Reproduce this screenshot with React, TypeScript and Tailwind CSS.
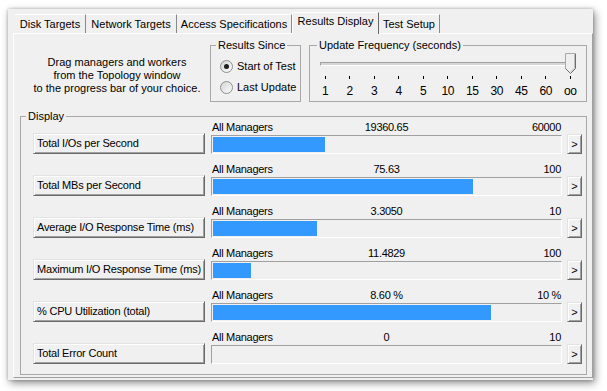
import React from "react";

const tabs = [
  { label: "Disk Targets", w: 71 },
  { label: "Network Targets", w: 91 },
  { label: "Access Specifications", w: 115 },
  { label: "Results Display", w: 87, active: true },
  { label: "Test Setup", w: 61 },
];

const rows = [
  { name: "Total I/Os per Second", value: "19360.65", max: "60000", frac: 0.3227 },
  { name: "Total MBs per Second", value: "75.63", max: "100", frac: 0.75 },
  { name: "Average I/O Response Time (ms)", value: "3.3050", max: "10", frac: 0.3 },
  { name: "Maximum I/O Response Time (ms)", value: "11.4829", max: "100", frac: 0.11 },
  { name: "% CPU Utilization (total)", value: "8.60 %", max: "10 %", frac: 0.8 },
  { name: "Total Error Count", value: "0", max: "10", frac: 0 },
];

const ticks = ["1", "2", "3", "4", "5", "10", "15", "30", "45", "60", "oo"];

function Radio({ checked, label }: { checked?: boolean; label: string }) {
  return (
    <div className="flex items-center h-[16px] pl-[9px]">
      <span className="w-[13px] h-[13px] rounded-full border border-[#8e8f8f] bg-linear-to-br from-[#d4d4d4] to-[#fdfdfd] flex items-center justify-center shrink-0">
        {checked && <span className="w-[5px] h-[5px] rounded-full bg-[#1e1e1e]" />}
      </span>
      <span className="ml-[4px] whitespace-nowrap">{label}</span>
    </div>
  );
}

function Thumb() {
  return (
    <svg width="11" height="21" viewBox="0 0 11 21" className="block">
      <path d="M0.5 0.5 H10.5 V15.5 L5.5 20.5 L0.5 15.5 Z" fill="#efefef" />
      <path d="M0.5 15.5 V0.5 H10" fill="none" stroke="#a8a8a8" />
      <path d="M10.5 0.5 V15.5 L5.5 20.5 L0.5 15.5" fill="none" stroke="#6e6e6e" />
      <path d="M9.5 1.5 V15 L5.5 19" fill="none" stroke="#bdbdbd" />
    </svg>
  );
}

export default function App() {
  return (
    <div className="w-[607px] h-[391px] bg-white overflow-hidden pt-[9px] pl-[8px] font-['Liberation_Sans',Arial,sans-serif] text-[11px] leading-[13px] text-black">
      <div className="w-[585px] h-[371px] bg-[#f0f0f0] shadow-[2px_3px_8px_rgba(0,0,0,0.45),0_0_3px_rgba(0,0,0,0.25)] pl-[5px] flex flex-col">
        {/* Tabs */}
        <div className="mt-[3px] h-[21px] flex items-end pl-[2px]">
          {tabs.map((t) =>
            t.active ? (
              <div
                key={t.label}
                style={{ width: t.w }}
                className="relative z-10 h-[22px] -mb-[1px] bg-[#f0f0f0] border-t border-l border-t-white border-l-white border-r border-r-[#696969] pt-[2px] text-center whitespace-nowrap"
              >
                {t.label}
              </div>
            ) : (
              <div
                key={t.label}
                style={{ width: t.w }}
                className="h-[19px] border-t border-t-white border-r border-r-[#8a8a8a] pt-[3px] text-center whitespace-nowrap"
              >
                {t.label}
              </div>
            )
          )}
        </div>

        {/* Tab panel */}
        <div className="w-[580px] h-[345px] border-t border-l border-t-white border-l-white border-r border-b border-r-[#a0a0a0] border-b-[#a0a0a0] pt-[5px] flex flex-col">
          {/* Upper section */}
          <div className="flex items-start">
            <div className="ml-[6px] w-[190px] pl-[4px] mt-[17px] text-center whitespace-nowrap">
              <div>Drag managers and workers</div>
              <div>from the Topology window</div>
              <div>to the progress bar of your choice.</div>
            </div>

            <fieldset className="w-[91px] h-[63px] border border-[#a8a8a8]">
              <legend className="ml-[5px] px-[2px] leading-[13px]">Results Since</legend>
              <div className="mt-[6px]">
                <Radio checked label="Start of Test" />
              </div>
              <div className="mt-[5px]">
                <Radio label="Last Update" />
              </div>
            </fieldset>

            <fieldset className="ml-[8px] w-[278px] h-[63px] border border-[#a8a8a8]">
              <legend className="ml-[7px] px-[2px] leading-[13px]">Update Frequency (seconds)</legend>
              <div className="relative mx-[10px] mt-[1px] h-[21px] flex items-center">
                <div className="w-full h-[4px] border-t border-l border-t-[#a0a0a0] border-l-[#a0a0a0] border-b border-r border-b-white border-r-white bg-[#d6d6d6]" />
                <div className="absolute right-0 top-0">
                  <Thumb />
                </div>
              </div>
              <div className="ml-[3px] mt-[2px] grid grid-cols-[repeat(11,24.5px)]">
                {ticks.map((t) => (
                  <div key={t} className="flex justify-center">
                    <div className="w-[1px] h-[3px] bg-black" />
                  </div>
                ))}
              </div>
              <div className="ml-[3px] mt-[6px] grid grid-cols-[repeat(11,24.5px)]">
                {ticks.map((t) => (
                  <div key={t} className="text-center text-[12px] leading-[13px] tracking-[-0.3px]">
                    {t}
                  </div>
                ))}
              </div>
            </fieldset>
          </div>

          {/* Display */}
          <fieldset className="ml-[6px] mt-[8px] w-[567px] h-[265px] border border-[#a8a8a8]">
            <legend className="ml-[5px] px-[2px] leading-[13px]">Display</legend>
            <div className="-mt-[2px] flex flex-col gap-[9px]">
              {rows.map((r) => (
                <div key={r.name} className="flex flex-col">
                  <div className="flex h-[12px] leading-[12px]">
                    <div className="w-[190px] shrink-0" />
                    <div className="w-[351px] grid grid-cols-[1fr_auto_1fr] px-[1px] whitespace-nowrap tracking-[-0.3px]">
                      <span>All Managers</span>
                      <span>{r.value}</span>
                      <span className="text-right">{r.max}</span>
                    </div>
                  </div>
                  <div className="flex items-start h-[21px] pl-[12px]">
                    <div className="w-[172px] h-[21px] bg-[#f0f0f0] border-t border-l border-t-[#e3e3e3] border-l-[#e3e3e3] border-b border-r border-b-[#696969] border-r-[#696969] shadow-[inset_1px_1px_0_#ffffff,inset_-1px_-1px_0_#a0a0a0] pl-[3px] flex items-center whitespace-nowrap tracking-[-0.2px]">
                      {r.name}
                    </div>
                    <div className="ml-[6px] mt-[2px] w-[351px] h-[19px] border-t border-l border-t-[#a0a0a0] border-l-[#a0a0a0] border-b border-r border-b-white border-r-white p-[1px]">
                      <div className="h-full bg-[#3399ff]" style={{ width: `${r.frac * 100}%` }} />
                    </div>
                    <div className="ml-[5px] mt-[1px] w-[15px] h-[20px] bg-[#f0f0f0] border-t border-l border-t-[#e3e3e3] border-l-[#e3e3e3] border-b border-r border-b-[#696969] border-r-[#696969] shadow-[inset_1px_1px_0_#ffffff,inset_-1px_-1px_0_#a0a0a0] flex items-center justify-center">
                      &gt;
                    </div>
                  </div>
                </div>
              ))}
            </div>
          </fieldset>
        </div>
      </div>
    </div>
  );
}
